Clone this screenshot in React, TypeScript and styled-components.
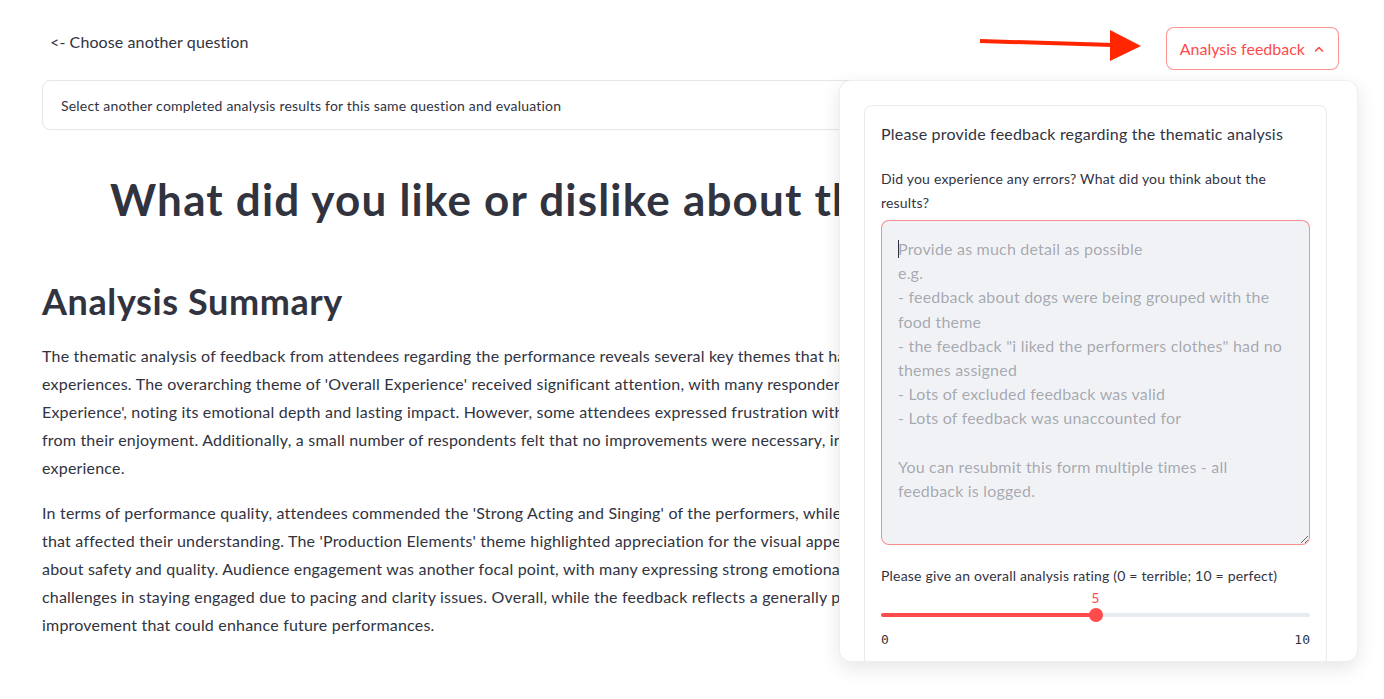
import styled, { createGlobalStyle } from 'styled-components'

const GlobalStyle = createGlobalStyle`
	html, body {
		margin: 0;
		padding: 0;
		background: #ffffff;
	}
	body {
		font-family: Lato, "Noto Sans", sans-serif;
		color: #31333f;
		letter-spacing: 0.2px;
		overflow: hidden;
	}
	* {
		box-sizing: border-box;
	}
`

const Page = styled.div`
	position: relative;
	width: 1384px;
	height: 699px;
	overflow: hidden;
`

const Main = styled.main`
	display: flex;
	flex-direction: column;
	padding: 0 42px;
`

const TopRow = styled.div`
	display: flex;
	justify-content: space-between;
	align-items: flex-start;
	padding-top: 22px;
	height: 70px;
`

const BackButton = styled.button`
	height: 38px;
	padding: 0 8px;
	background: transparent;
	border: none;
	font-family: inherit;
	font-size: 16px;
	letter-spacing: 0.1px;
	color: #31333f;
	cursor: pointer;
`

const FeedbackButton = styled.button`
	display: flex;
	align-items: center;
	gap: 8px;
	height: 43px;
	margin-top: 5px;
	margin-right: 3px;
	padding: 0 13px 0 13px;
	background: #ffffff;
	border: 1px solid rgba(255, 75, 75, 0.6);
	border-radius: 8px;
	font-family: inherit;
	font-size: 16px;
	letter-spacing: 0;
	color: #ff4b4b;
	cursor: pointer;
`

const Expander = styled.div`
	margin-top: 10px;
	height: 50px;
	display: flex;
	align-items: center;
	padding: 0 18px;
	border: 1px solid rgba(49, 51, 63, 0.12);
	border-radius: 8px;
	font-size: 14px;
`

const Title = styled.h1`
	margin: 43px 0 0;
	padding-left: 68px;
	font-size: 44px;
	line-height: 53px;
	font-weight: 700;
	letter-spacing: 1.2px;
	white-space: nowrap;
	color: #31333f;
`

const SectionTitle = styled.h2`
	margin: 54px 0 0;
	font-size: 36px;
	line-height: 43px;
	font-weight: 700;
	letter-spacing: 0.6px;
	color: #31333f;
`

const Paragraph = styled.p<{ $first?: boolean }>`
	margin: ${(p) => (p.$first ? '19px' : '17px')} 0 0;
	font-size: 16px;
	line-height: 28px;
`

const Line = styled.span`
	display: block;
	white-space: nowrap;
`

const Annotation = styled.svg`
	position: absolute;
	left: 975px;
	top: 25px;
`

const Popover = styled.div`
	position: absolute;
	left: 839px;
	top: 80px;
	width: 519px;
	height: 582px;
	padding: 24px 30px 24px 24px;
	background: #ffffff;
	border: 1px solid rgba(49, 51, 63, 0.08);
	border-radius: 12px;
	box-shadow: 0 6px 20px rgba(0, 0, 0, 0.1);
	overflow: hidden;
`

const Form = styled.div`
	display: flex;
	flex-direction: column;
	padding: 16px;
	border: 1px solid rgba(49, 51, 63, 0.1);
	border-radius: 8px;
`

const FormHeader = styled.div`
	font-size: 16px;
	line-height: 24px;
`

const Label = styled.label<{ $gap: number }>`
	margin-top: ${(p) => p.$gap}px;
	font-size: 14px;
	line-height: 24px;
`

const TextAreaWrap = styled.div`
	position: relative;
	margin-top: 5px;

	&::after {
		content: '';
		position: absolute;
		left: 17px;
		top: 20px;
		width: 1px;
		height: 18px;
		background: #31333f;
	}
`

const TextArea = styled.textarea`
	display: block;
	width: 100%;
	height: 325px;
	padding: 16px;
	background: #f0f2f6;
	border: 1px solid rgba(255, 75, 75, 0.6);
	border-radius: 8px;
	font-family: inherit;
	font-size: 16px;
	letter-spacing: 0.2px;
	line-height: 24.2px;
	color: #31333f;
	resize: vertical;
	outline: none;

	&::placeholder {
		color: rgba(49, 51, 63, 0.4);
	}
`

const SliderBox = styled.div`
	display: flex;
	flex-direction: column;
`

const SliderValue = styled.div<{ $pct: number }>`
	height: 20px;
	position: relative;
	font-size: 14px;
	line-height: 20px;
	color: #ff4b4b;

	span {
		position: absolute;
		left: ${(p) => p.$pct}%;
		transform: translateX(-50%);
	}
`

const Track = styled.div`
	position: relative;
	height: 4px;
	margin-top: 5px;
	border-radius: 2px;
	background: #e6eaf1;
`

const Fill = styled.div`
	height: 100%;
	border-radius: 2px;
	background: #ff4b4b;
`

const Thumb = styled.div`
	position: absolute;
	top: 50%;
	width: 14px;
	height: 14px;
	border-radius: 50%;
	background: #ff4b4b;
	transform: translate(-50%, -50%);
`

const Ticks = styled.div`
	display: flex;
	justify-content: space-between;
	margin-top: 13px;
	font-family: "DejaVu Sans Mono", "Liberation Mono", monospace;
	font-size: 13px;
	letter-spacing: 0;
	line-height: 20px;
	color: #31333f;
`

const placeholder = [
	'Provide as much detail as possible',
	'e.g.',
	'- feedback about dogs were being grouped with the',
	'food theme',
	'- the feedback "i liked the performers clothes" had no',
	'themes assigned',
	'- Lots of excluded feedback was valid',
	'- Lots of feedback was unaccounted for',
	'',
	'You can resubmit this form multiple times - all',
	'feedback is logged.',
].join('\n')

const summary = [
	[
		'The thematic analysis of feedback from attendees regarding the performance reveals several key themes that have shaped audience',
		"experiences. The overarching theme of 'Overall Experience' received significant attention, with many respondents praising the 'Overall",
		"Experience', noting its emotional depth and lasting impact. However, some attendees expressed frustration with distractions that detracted",
		'from their enjoyment. Additionally, a small number of respondents felt that no improvements were necessary, indicating a highly satisfying',
		'experience.',
	],
	[
		"In terms of performance quality, attendees commended the 'Strong Acting and Singing' of the performers, while some noted audio issues",
		"that affected their understanding. The 'Production Elements' theme highlighted appreciation for the visual appeal, alongside concerns",
		'about safety and quality. Audience engagement was another focal point, with many expressing strong emotional connections, while others noted',
		'challenges in staying engaged due to pacing and clarity issues. Overall, while the feedback reflects a generally positive reception, there are areas for',
		'improvement that could enhance future performances.',
	],
]

const RatingSlider = ({ value, max }: { value: number; max: number }) => {
	const pct = (value / max) * 100
	return (
		<SliderBox>
			<SliderValue $pct={pct}>
				<span>{value}</span>
			</SliderValue>
			<Track>
				<Fill style={{ width: `${pct}%` }} />
				<Thumb style={{ left: `${pct}%` }} />
			</Track>
			<Ticks>
				<span>0</span>
				<span>{max}</span>
			</Ticks>
		</SliderBox>
	)
}

const App = () => {
	return (
		<Page>
			<GlobalStyle />
			<Main>
				<TopRow>
					<BackButton>&lt;- Choose another question</BackButton>
					<FeedbackButton>
						Analysis feedback
						<svg width='12' height='12' viewBox='0 0 12 12'>
							<polyline points='2.5,8 6,4.5 9.5,8' fill='none' stroke='#ff4b4b' strokeWidth='1.6' strokeLinecap='round' strokeLinejoin='round' />
						</svg>
					</FeedbackButton>
				</TopRow>
				<Expander>Select another completed analysis results for this same question and evaluation</Expander>
				<Title>What did you like or dislike about the performance?</Title>
				<SectionTitle>Analysis Summary</SectionTitle>
				{summary.map((lines, i) => (
					<Paragraph key={i} $first={i === 0}>
						{lines.map((l) => (
							<Line key={l}>{l}</Line>
						))}
					</Paragraph>
				))}
			</Main>

			<Annotation width='170' height='40' viewBox='0 0 170 40'>
				<line x1='5' y1='16' x2='138' y2='20' stroke='#ff2600' strokeWidth='4' />
				<polygon points='135,5 166,21 135,36' fill='#ff2600' />
			</Annotation>

			<Popover>
				<Form>
					<FormHeader>Please provide feedback regarding the thematic analysis</FormHeader>
					<Label $gap={21}>
						Did you experience any errors? What did you think about the
						<br />
						results?
					</Label>
					<TextAreaWrap>
						<TextArea placeholder={placeholder} />
					</TextAreaWrap>
					<Label $gap={19}>Please give an overall analysis rating (0 = terrible; 10 = perfect)</Label>
					<RatingSlider value={5} max={10} />
				</Form>
			</Popover>
		</Page>
	)
}

export default App
